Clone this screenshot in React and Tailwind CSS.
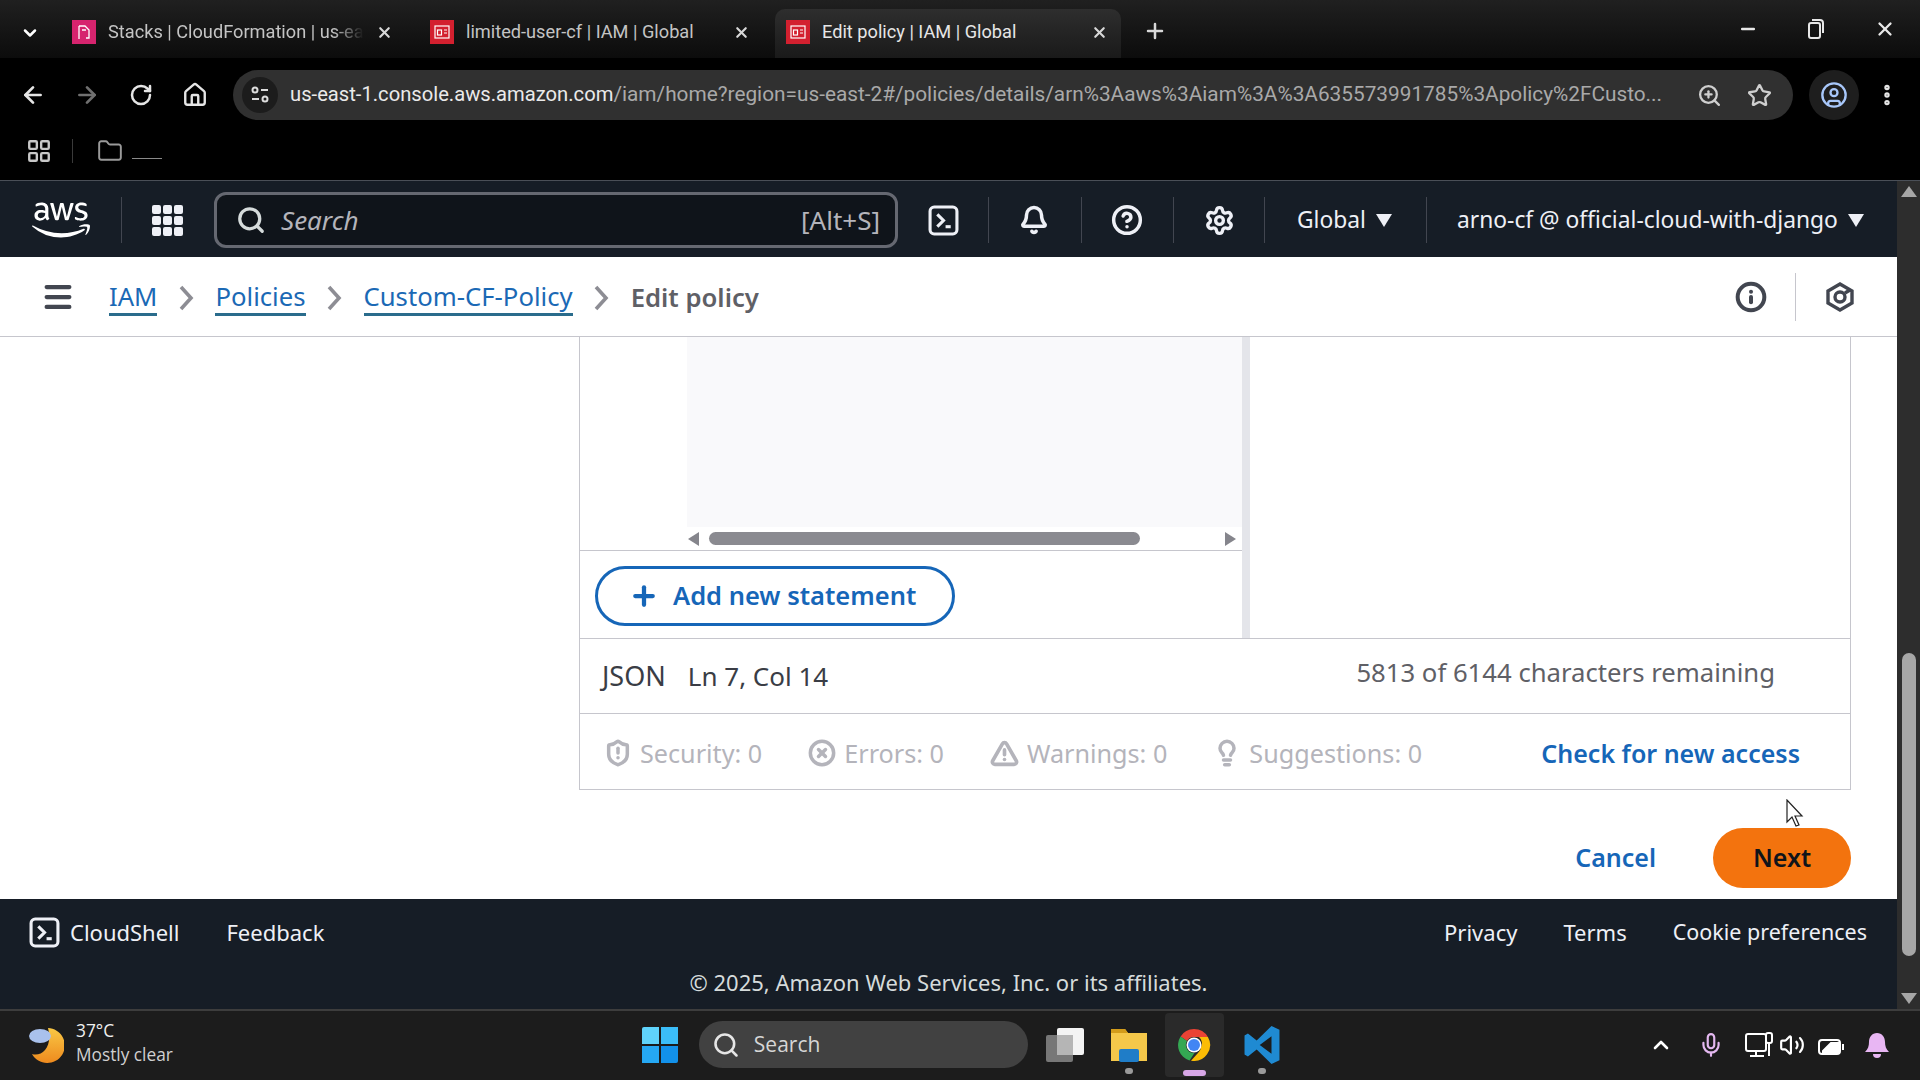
import React from "react";
import { ChevronDown, X, ArrowLeft, ArrowRight, RotateCw, Home, Search, Star, ZoomIn, CircleUser, EllipsisVertical, Minus, Plus, LayoutGrid, Folder, Bell, Settings, CircleHelp, Menu, Info, ShieldAlert, CircleX, TriangleAlert, Lightbulb, ChevronUp, Mic, Volume2 } from "lucide-react";
import { FaAws } from "react-icons/fa";

const Favicon = ({ pink }) => (
  <svg width="24" height="24" viewBox="0 0 24 24" className="shrink-0">
    <rect width="24" height="24" fill={pink ? "#d6246e" : "#d3202f"} />
    {pink ? (
      <path d="M7 6h6l4 4v8h-3M7 6v13M10 10h4" stroke="#fff" strokeWidth="1.3" fill="none" />
    ) : (
      <g stroke="#fff" strokeWidth="1.2" fill="none">
        <rect x="5" y="6" width="14" height="12" />
        <rect x="7.5" y="10" width="4" height="5" />
        <path d="M14 10h3M14 13h3" />
      </g>
    )}
  </svg>
);

const Tab = ({ pink, title, active, w, pr, pl, fade }) => (
  <div className={`flex items-center h-[49px] pb-[3px] shrink-0 ${pl} ${w} ${pr} ${active ? "bg-gradient-to-b from-[#2e2e2e] to-[#1a1a1a] rounded-t-[10px]" : ""}`}>
    <Favicon pink={pink} />
    <span className={`ml-[12px] flex-1 whitespace-nowrap text-[18.2px] ${fade ? "[mask-image:linear-gradient(to_right,black_88%,transparent)] mr-[12px]" : ""} ${active ? "text-[#e6e6e6]" : "text-[#c4c4c4]"}`}>{title}</span>
    <X size={17} strokeWidth={3} className="text-[#d8d8d8] shrink-0" />
  </div>
);

const Terminal = ({ size = 31 }) => (
  <svg width={size} height={size} viewBox="0 0 30 30" fill="none" className="shrink-0">
    <rect x="2" y="2" width="26" height="26" rx="4" stroke="#eef0f6" strokeWidth="3" />
    <path d="M9 9l6 6-6 6" stroke="#eef0f6" strokeWidth="3" />
    <path d="M17 21h5" stroke="#eef0f6" strokeWidth="3" />
  </svg>
);

const Divider = ({ ml }) => <div className={`w-px h-[46px] bg-[#424650] ${ml}`} />;

const Caret = () => (
  <div className="ml-[10px] w-0 h-0 border-x-[8px] border-x-transparent border-t-[13px] border-t-[#eef0f6]" />
);

const Crumb = ({ children }) => (
  <a className="text-[#1b69b5] text-[25.7px] leading-[33px] border-b-[3px] border-[#2a6c8c]">{children}</a>
);

const Sep = () => (
  <svg width="15" height="26" viewBox="0 0 15 26" fill="none" stroke="#8d8d94" strokeWidth="3.6" className="mx-[21.5px] shrink-0">
    <path d="M2 2l10 11L2 24" />
  </svg>
);

const Stat = ({ icon, label, ml }) => (
  <div className={`flex items-center text-[#b4b4bb] text-[25.2px] ${ml}`}>
    {icon}
    <span className="ml-[8px]">{label}</span>
  </div>
);

export default function App() {
  return (
    <div className="w-[1920px] h-[1080px] flex flex-col overflow-hidden bg-black font-['Noto_Sans',sans-serif] relative">
      <div className="h-[181px] shrink-0 bg-black font-['Roboto',sans-serif] flex flex-col">
        <div className="h-[58px] flex items-end pl-[14px] bg-gradient-to-b from-[#202020] to-[#0c0c0c]">
          <ChevronDown size={20} strokeWidth={3} className="text-white mb-[15px] mr-[17px] ml-[6px]" />
          <Tab pink fade title="Stacks | CloudFormation | us-ea" w="w-[358px]" pl="pl-[15px]" pr="pr-[22px]" />
          <Tab title="limited-user-cf | IAM | Global" w="w-[357px]" pl="pl-[15px]" pr="pr-[22px]" />
          <Tab active title="Edit policy | IAM | Global" w="w-[346px] ml-[3px]" pl="pl-[11px]" pr="pr-[13px]" />
          <Plus size={24} strokeWidth={2.5} className="text-[#d8d8d8] ml-[22px] mb-[15px]" />
          <div className="flex-1" />
          <div className="flex items-center gap-[50px] pr-[24px] mb-[18px] text-[#e8e8e8]">
            <Minus size={20} strokeWidth={3} />
            <svg width="16" height="20" viewBox="0 0 16 20" fill="none" stroke="#e8e8e8" strokeWidth="2">
              <rect x="1" y="4" width="11" height="15" rx="2" />
              <path d="M4 1h8a3 3 0 0 1 3 3v10" />
            </svg>
            <X size={22} strokeWidth={2.5} />
          </div>
        </div>
        <div className="h-[64px] flex items-center pt-[10px]">
          <ArrowLeft size={26} strokeWidth={2.5} className="text-[#e5e5e5] ml-[20px]" />
          <ArrowRight size={26} strokeWidth={2.5} className="text-[#707070] ml-[28px]" />
          <RotateCw size={24} strokeWidth={2.5} className="text-[#e5e5e5] ml-[29px]" />
          <Home size={26} strokeWidth={2.2} className="text-[#e5e5e5] ml-[29px]" />
          <div className="ml-[25px] w-[1560px] h-[50px] rounded-full bg-[#303030] flex items-center pl-[9px] pr-[21px] shrink-0">
            <div className="w-[36px] h-[36px] rounded-full bg-[#1c1c1c] flex items-center justify-center shrink-0">
              <svg width="20" height="20" viewBox="0 0 20 20" fill="none" stroke="#ddd" strokeWidth="2">
                <circle cx="5" cy="5" r="2.5" /><path d="M11 5h7M2 14h7" /><circle cx="15" cy="14" r="2.5" />
              </svg>
            </div>
            <span className="ml-[12px] text-[20.8px] whitespace-nowrap flex-1 min-w-0 text-[#a9a9a9]">
              <span className="text-[#eaeaea] text-[20.2px]">us-east-1.console.aws.amazon.com</span>/iam/home?region=us-east-2#/policies/details/arn%3Aaws%3Aiam%3A%3A635573991785%3Apolicy%2FCusto...
            </span>
            <ZoomIn size={25} strokeWidth={2.2} className="text-[#cfcfcf] ml-[30px] shrink-0" />
            <Star size={25} strokeWidth={2.2} className="text-[#cfcfcf] ml-[25px] shrink-0" />
          </div>
          <div className="ml-[16px] w-[50px] h-[50px] rounded-full bg-[#1e1e1e] flex items-center justify-center shrink-0">
            <CircleUser size={28} strokeWidth={2} className="text-[#a8c7fa]" />
          </div>
          <EllipsisVertical size={26} strokeWidth={3} className="text-[#e5e5e5] ml-[15px] shrink-0" />
        </div>
        <div className="flex-1 flex items-center pl-[26px] border-b border-[#4a4f57]">
          <LayoutGrid size={26} strokeWidth={2.2} className="text-[#c8c8c8]" />
          <div className="w-px h-[24px] bg-[#3a3a3a] ml-[20px]" />
          <Folder size={26} strokeWidth={1.8} className="text-[#9a9a9a] ml-[24px]" />
          <div className="w-[30px] h-px bg-[#8a8a8a] ml-[9px] mt-[14px]" />
        </div>
      </div>

      <div className="flex-1 flex min-h-0">
        <div className="w-[1897px] flex flex-col">
          <div className="h-[76px] pt-[2px] bg-[#161d26] flex items-center text-[#eef0f6] text-[22.8px] shrink-0">
            <FaAws size={58} className="text-white ml-[32px]" />
            <div className="ml-[31px] w-px h-[46px] bg-[#424650]" />
            <div className="ml-[30px] grid grid-cols-3 gap-[2px]">
              {Array.from({ length: 9 }).map((_, i) => (
                <div key={i} className="w-[9px] h-[9px] rounded-[2px] bg-[#eef0f6]" />
              ))}
            </div>
            <div className="ml-[31px] w-[684px] h-[56px] rounded-[12px] border-[3px] border-[#656871] bg-[#0f141a] flex items-center pl-[19px] pr-[15px] text-[#b4b4bb] text-[26px]">
              <Search size={30} strokeWidth={2.6} className="text-[#d5dbdb]" />
              <span className="ml-[15px] italic flex-1">Search</span>
              <span>[Alt+S]</span>
            </div>
            <div className="ml-[30px]"><Terminal /></div>
            <Divider ml="ml-[29px]" />
            <Bell size={30} strokeWidth={2.8} className="ml-[30px]" />
            <Divider ml="ml-[32px]" />
            <CircleHelp size={32} strokeWidth={2.6} className="ml-[29px]" />
            <Divider ml="ml-[30px]" />
            <Settings size={31} strokeWidth={2.6} className="ml-[30px]" />
            <Divider ml="ml-[29px]" />
            <span className="ml-[32px]">Global</span>
            <Caret />
            <Divider ml="ml-[34px]" />
            <span className="ml-[30px] whitespace-nowrap">arno-cf @ official-cloud-with-django</span>
            <Caret />
          </div>

          <div className="h-[80px] bg-white border-b border-[#c6c6cd] flex items-center shrink-0">
            <Menu size={34} strokeWidth={3} className="text-[#424650] ml-[41px] mr-[34px]" />
            <div className="flex items-center pt-[3px]">
              <Crumb>IAM</Crumb>
              <Sep />
              <Crumb>Policies</Crumb>
              <Sep />
              <Crumb>Custom-CF-Policy</Crumb>
              <Sep />
              <span className="text-[25.7px] font-semibold text-[#5f6066]">Edit policy</span>
            </div>
            <div className="flex-1" />
            <Info size={32} strokeWidth={3} className="text-[#424650]" />
            <div className="w-px h-[48px] bg-[#c6c6cd] mx-[28px]" />
            <svg width="32" height="32" viewBox="0 0 32 32" fill="none" stroke="#424650" strokeWidth="3.4" className="mr-[41px]">
              <path d="M16 3l12 7v12l-12 7-12-7V10z" />
              <circle cx="16" cy="16" r="5" />
              <path d="M21 12l5-3" />
            </svg>
          </div>

          <div className="flex-1 bg-white flex flex-col items-end pr-[46px] min-h-0">
            <div className="w-[1272px] border-x border-b border-[#c6c6cd] flex flex-col">
              <div className="h-[302px] flex border-b border-[#c6c6cd]">
                <div className="w-[662px] flex flex-col">
                  <div className="h-[190px] pl-[107px]">
                    <div className="h-full bg-[#f9f9fb]" />
                  </div>
                  <div className="h-[24px] border-b border-[#c6c6cd] pl-[108px] pr-[6px] flex items-center">
                    <div className="w-0 h-0 border-y-[7px] border-y-transparent border-r-[11px] border-r-[#85858c]" />
                    <div className="ml-[10px] w-[431px] h-[13px] rounded-full bg-[#8a8a90]" />
                    <div className="flex-1" />
                    <div className="w-0 h-0 border-y-[7px] border-y-transparent border-l-[11px] border-l-[#85858c]" />
                  </div>
                  <div className="flex-1 flex items-center pl-[15px] pt-[2px]">
                    <div className="w-[360px] h-[60px] rounded-full border-[3px] border-[#1666b8] flex items-center text-[#1666b8] text-[25.5px] font-semibold pl-[31px]">
                      <Plus size={30} strokeWidth={3.4} />
                      <span className="ml-[14px]">Add new statement</span>
                    </div>
                  </div>
                </div>
                <div className="w-[8px] bg-[#e4e5ea]" />
                <div className="flex-1" />
              </div>
              <div className="h-[75px] flex items-center border-b border-[#c6c6cd] pl-[22px] pr-[75px] text-[26px]">
                <span className="text-[#3a3d45] text-[27px]">JSON</span>
                <span className="text-[#3a3d45] ml-[22px]">Ln 7, Col 14</span>
                <div className="flex-1" />
                <span className="text-[#5f6066] text-[25.7px] -mt-[5px]">5813 of 6144 characters remaining</span>
              </div>
              <div className="h-[75px] flex items-center pl-[24px] pr-[50px] pt-[4px]">
                <Stat icon={<ShieldAlert size={28} strokeWidth={3} />} label="Security: 0" />
                <Stat icon={<CircleX size={28} strokeWidth={3} />} label="Errors: 0" ml="ml-[46px]" />
                <Stat icon={<TriangleAlert size={29} strokeWidth={3} />} label="Warnings: 0" ml="ml-[46px]" />
                <Stat icon={<Lightbulb size={28} strokeWidth={3} />} label="Suggestions: 0" ml="ml-[46px]" />
                <div className="flex-1" />
                <span className="text-[#1666b8] text-[25px] font-semibold">Check for new access</span>
              </div>
            </div>
            <div className="flex items-center mt-[38px]">
              <span className="text-[#1666b8] text-[25px] font-semibold">Cancel</span>
              <div className="ml-[57px] w-[138px] h-[60px] rounded-full bg-[#f3730e] flex items-center justify-center text-[#0f141a] text-[25px] font-semibold">Next</div>
            </div>
          </div>

          <div className="h-[110px] bg-[#161d26] text-[#eef0f6] text-[22px] shrink-0 flex flex-col relative">
            <div className="h-[66px] flex items-center pl-[29px] pr-[30px]">
              <Terminal size={31} />
              <span className="ml-[10px]">CloudShell</span>
              <span className="ml-[47px]">Feedback</span>
              <div className="flex-1" />
              <span>Privacy</span>
              <span className="ml-[46px]">Terms</span>
              <span className="ml-[46px] text-[21.5px]">Cookie preferences</span>
            </div>
            <div className="text-center text-[#d5dbdb] pt-[1px]">© 2025, Amazon Web Services, Inc. or its affiliates.</div>
          </div>
        </div>

        <div className="flex-1 bg-[#2d2d2d] flex flex-col items-center py-[5px]">
          <div className="w-0 h-0 border-x-[8px] border-x-transparent border-b-[11px] border-b-[#a6a6a6]" />
          <div className="mt-[456px] w-[14px] h-[303px] rounded-full bg-[#a6a6a6]" />
          <div className="flex-1" />
          <div className="w-0 h-0 border-x-[8px] border-x-transparent border-t-[11px] border-t-[#a6a6a6]" />
        </div>
      </div>

      <div className="h-[71px] shrink-0 bg-[#1c1c1c] border-t-2 border-[#3d3d3d] flex items-center pb-[2px] text-white font-['Open_Sans',sans-serif]">
        <svg width="36" height="38" viewBox="0 0 36 38" className="ml-[28px] shrink-0">
          <defs>
            <linearGradient id="moon" x1="0" y1="0" x2="0" y2="1">
              <stop offset="0" stopColor="#f9c845" />
              <stop offset="1" stopColor="#ee8a1e" />
            </linearGradient>
          </defs>
          <path d="M20 2A17.5 17.5 0 1 1 4 28C14 31 25 21 20 2z" fill="url(#moon)" />
          <ellipse cx="12" cy="10" rx="11" ry="7" fill="#a9c1ec" />
        </svg>
        <div className="ml-[12px] flex flex-col leading-[24px] -mt-[4px]">
          <span className="text-[17.3px] text-[#f0f0f0]">37°C</span>
          <span className="text-[17.3px] text-[#d0d0d0]">Mostly clear</span>
        </div>
        <div className="ml-[469px] grid grid-cols-2 gap-[2px]">
          <div className="w-[17px] h-[17px] bg-[#5fd3fb] rounded-tl-[2px]" />
          <div className="w-[17px] h-[17px] bg-[#3bbdf8]" />
          <div className="w-[17px] h-[17px] bg-[#25a8f3]" />
          <div className="w-[17px] h-[17px] bg-[#1291ea] rounded-br-[2px]" />
        </div>
        <div className="ml-[21px] w-[329px] h-[47px] rounded-full bg-[#414141] flex items-center pl-[13px]">
          <Search size={28} strokeWidth={2.2} className="text-[#e6e6e6]" />
          <span className="ml-[14px] text-[21px] text-[#d6d6d6]">Search</span>
        </div>
        <div className="ml-[18px] relative w-[38px] h-[34px]">
          <div className="absolute left-0 bottom-0 w-[27px] h-[27px] bg-[#777] rounded-[2px]" />
          <div className="absolute right-0 top-0 w-[27px] h-[27px] bg-[#f3f3f3] rounded-[2px]" />
          <div className="absolute left-[11px] top-[7px] w-[16px] h-[20px] bg-[#b5b5b5]" />
        </div>
        <div className="ml-[27px] relative">
          <svg width="36" height="38" viewBox="0 0 36 38" className="block">
            <path d="M0 3h14l3 4h19v28H0z" fill="#f5c84a" />
            <path d="M0 3h14l3 4H0z" fill="#d39c1b" />
            <rect x="8" y="23" width="20" height="13" rx="2" fill="#1f7dc8" />
          </svg>
          <div className="absolute -bottom-[10px] left-[14px] w-[8px] h-[6px] rounded-full bg-[#9a9a9a]" />
        </div>
        <div className="ml-[18px] relative w-[59px] h-[64px] bg-[#2a2a2a] rounded-[4px] flex items-center justify-center">
          <svg width="36" height="36" viewBox="0 0 36 36" className="block">
            <path d="M18 2a16 16 0 0 1 13.9 8H18a8 8 0 0 0-7 4L4.6 9.5A16 16 0 0 1 18 2z" fill="#ea4335" />
            <path d="M4.6 9.5L11 14a8 8 0 0 0 7.5 12l-5 7.5A16 16 0 0 1 4.6 9.5z" fill="#34a853" />
            <path d="M31.9 10A16 16 0 0 1 15 33.7L22 26a8 8 0 0 0 3-6 8 8 0 0 0-2-10z" fill="#fbbc05" />
            <circle cx="18" cy="18" r="7.5" fill="#fff" />
            <circle cx="18" cy="18" r="6" fill="#4285f4" />
          </svg>
          <div className="absolute bottom-[1px] left-[18px] w-[23px] h-[6px] rounded-full bg-[#d7a6e6]" />
        </div>
        <div className="ml-[19px] relative">
          <svg width="38" height="38" viewBox="0 0 100 100" className="block">
            <path d="M96 10L75 0 36 38 13 20 4 25v50l9 5 23-18 39 38 21-10V10zM75 27v46L44 50z" fill="#1f8ad2" />
          </svg>
          <div className="absolute -bottom-[10px] left-[15px] w-[8px] h-[6px] rounded-full bg-[#9a9a9a]" />
        </div>
        <div className="flex-1" />
        <ChevronUp size={24} strokeWidth={2.6} className="text-white" />
        <Mic size={26} strokeWidth={2} className="text-[#e4b8f0] ml-[25px]" />
        <svg width="28" height="26" viewBox="0 0 28 26" fill="none" stroke="#fff" strokeWidth="2" className="ml-[21px]">
          <rect x="1" y="2" width="20" height="17" rx="2" />
          <path d="M11 19v5M5 24h14" />
          <rect x="21" y="1" width="6" height="10" rx="2" fill="#1c1c1c" />
          <path d="M24 11v13" />
        </svg>
        <Volume2 size={26} strokeWidth={2} className="text-white ml-[6px]" />
        <svg width="26" height="22" viewBox="0 0 26 22" fill="none" stroke="#fff" strokeWidth="2" className="ml-[13px]">
          <rect x="1" y="6" width="21" height="14" rx="3" />
          <path d="M25 10v6" />
          <path d="M5 17l8-8h7v9H5z" fill="#fff" />
        </svg>
        <svg width="24" height="26" viewBox="0 0 24 26" fill="#e8b6f3" className="ml-[21px] mr-[31px]">
          <path d="M12 1c5 0 8 4 8 9 0 4 1 7 4 10H0c3-3 4-6 4-10 0-5 3-9 8-9z" />
          <path d="M8 22h8a4 4 0 0 1-8 0z" />
        </svg>
      </div>

      <svg width="22" height="30" viewBox="0 0 22 30" className="absolute left-[1785px] top-[799px]">
        <path d="M2 1v22l5-5 4 9 3-1-4-9h7z" fill="#fff" stroke="#222" strokeWidth="1.2" />
      </svg>
    </div>
  );
}
